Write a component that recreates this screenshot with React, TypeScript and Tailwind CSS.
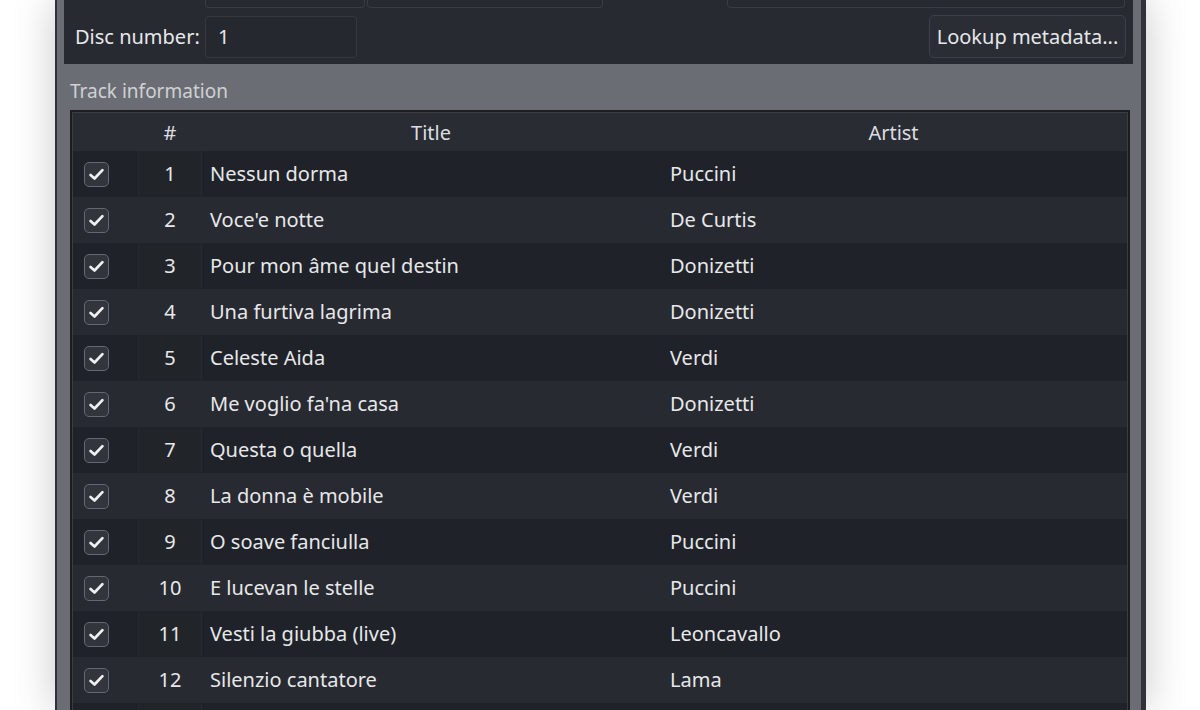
import React from "react";

type Track = { n: number; title: string; artist: string };

const TRACKS: Track[] = [
  { n: 1, title: "Nessun dorma", artist: "Puccini" },
  { n: 2, title: "Voce'e notte", artist: "De Curtis" },
  { n: 3, title: "Pour mon âme quel destin", artist: "Donizetti" },
  { n: 4, title: "Una furtiva lagrima", artist: "Donizetti" },
  { n: 5, title: "Celeste Aida", artist: "Verdi" },
  { n: 6, title: "Me voglio fa'na casa", artist: "Donizetti" },
  { n: 7, title: "Questa o quella", artist: "Verdi" },
  { n: 8, title: "La donna è mobile", artist: "Verdi" },
  { n: 9, title: "O soave fanciulla", artist: "Puccini" },
  { n: 10, title: "E lucevan le stelle", artist: "Puccini" },
  { n: 11, title: "Vesti la giubba (live)", artist: "Leoncavallo" },
  { n: 12, title: "Silenzio cantatore", artist: "Lama" },
  { n: 13, title: "", artist: "" },
];

function CheckBox() {
  return (
    <span className="flex h-[25px] w-[25px] items-center justify-center rounded-[5px] border-[1.5px] border-[#646870] bg-[#32353c]">
      <svg width="19" height="19" viewBox="0 0 24 24" fill="none">
        <polyline
          points="4.5,12.5 9.5,17 19.5,6.5"
          stroke="#eef0f2"
          strokeWidth="3.4"
          strokeLinecap="round"
          strokeLinejoin="round"
        />
      </svg>
    </span>
  );
}

function TrackRow({ track }: { track: Track }) {
  const odd = track.n % 2 === 1;
  return (
    <div className={`flex h-[46px] items-center ${odd ? "bg-[#1f2228]" : "bg-[#272a31]"}`}>
      <div className="flex w-[65px] shrink-0 items-center pl-[11px]">{track.title && <CheckBox />}</div>
      <div
        className={`flex h-full w-[64px] shrink-0 items-center justify-center border-x ${
          odd ? "border-[#262930] bg-[#212429]" : "border-transparent"
        }`}
      >
        {track.title && track.n}
      </div>
      <div className="w-[458px] shrink-0 pl-[8px]">{track.title}</div>
      <div className="flex-1 pl-[10px]">{track.artist}</div>
    </div>
  );
}

export default function App() {
  return (
    <div className="flex h-[710px] w-[1200px] overflow-hidden bg-white font-['Noto_Sans',sans-serif] text-[20px] text-[#e7e8ea]">
      <div className="ml-[55px] flex w-[1091px] shrink-0 flex-col border-l-2 border-r-[5px] border-[#303237] bg-[#6a6d74] pl-[7px] pr-[8px] shadow-[0_0_40px_rgba(0,0,0,0.22)]">
        {/* metadata group */}
        <div className="flex h-[64px] shrink-0 flex-col bg-[#272a31]">
          <div className="flex h-[8px]">
            <div className="ml-[141px] w-[160px] rounded-b-[4px] border-x border-b border-[#393c43]" />
            <div className="ml-[2px] w-[236px] rounded-b-[4px] border-x border-b border-[#393c43]" />
            <div className="ml-[124px] w-[398px] rounded-b-[4px] border-x border-b border-[#393c43]" />
          </div>
          <div className="mt-[7px] flex h-[43px] items-center">
            <span className="w-[141px] pl-[11px] leading-none">Disc number:</span>
            <div className="flex h-[42px] w-[152px] items-center rounded-[4px] border border-[#363940] bg-[#25282e] pl-[12px]">
              1
            </div>
            <div className="flex-1" />
            <button className="mr-[7px] flex h-[43px] w-[197px] items-center justify-center rounded-[5px] border border-[#3d4048] bg-[#2a2d34] text-[20px] text-[#e6e7e9]">
              Lookup metadata...
            </button>
          </div>
        </div>

        {/* track group */}
        <div className="flex min-h-0 flex-1 flex-col pl-[6px] pr-[3px]">
          <div className="h-[46px] shrink-0 pt-[14px] text-[19px] leading-[26px] text-[#d0d1d4]">
            Track information
          </div>
          <div className="flex-1 border-2 border-b-0 border-[#1c1e22]">
            <div className="h-full border border-b-0 border-[#3a3d44]">
              <div className="flex h-[38px] items-center bg-[#292c33] pt-[2px] text-[#dcdde0]">
                <div className="w-[65px] shrink-0" />
                <div className="w-[64px] shrink-0 text-center">#</div>
                <div className="w-[458px] shrink-0 text-center">Title</div>
                <div className="flex-1 text-center">Artist</div>
              </div>
              {TRACKS.map((t) => (
                <TrackRow key={t.n} track={t} />
              ))}
            </div>
          </div>
        </div>
      </div>
    </div>
  );
}
